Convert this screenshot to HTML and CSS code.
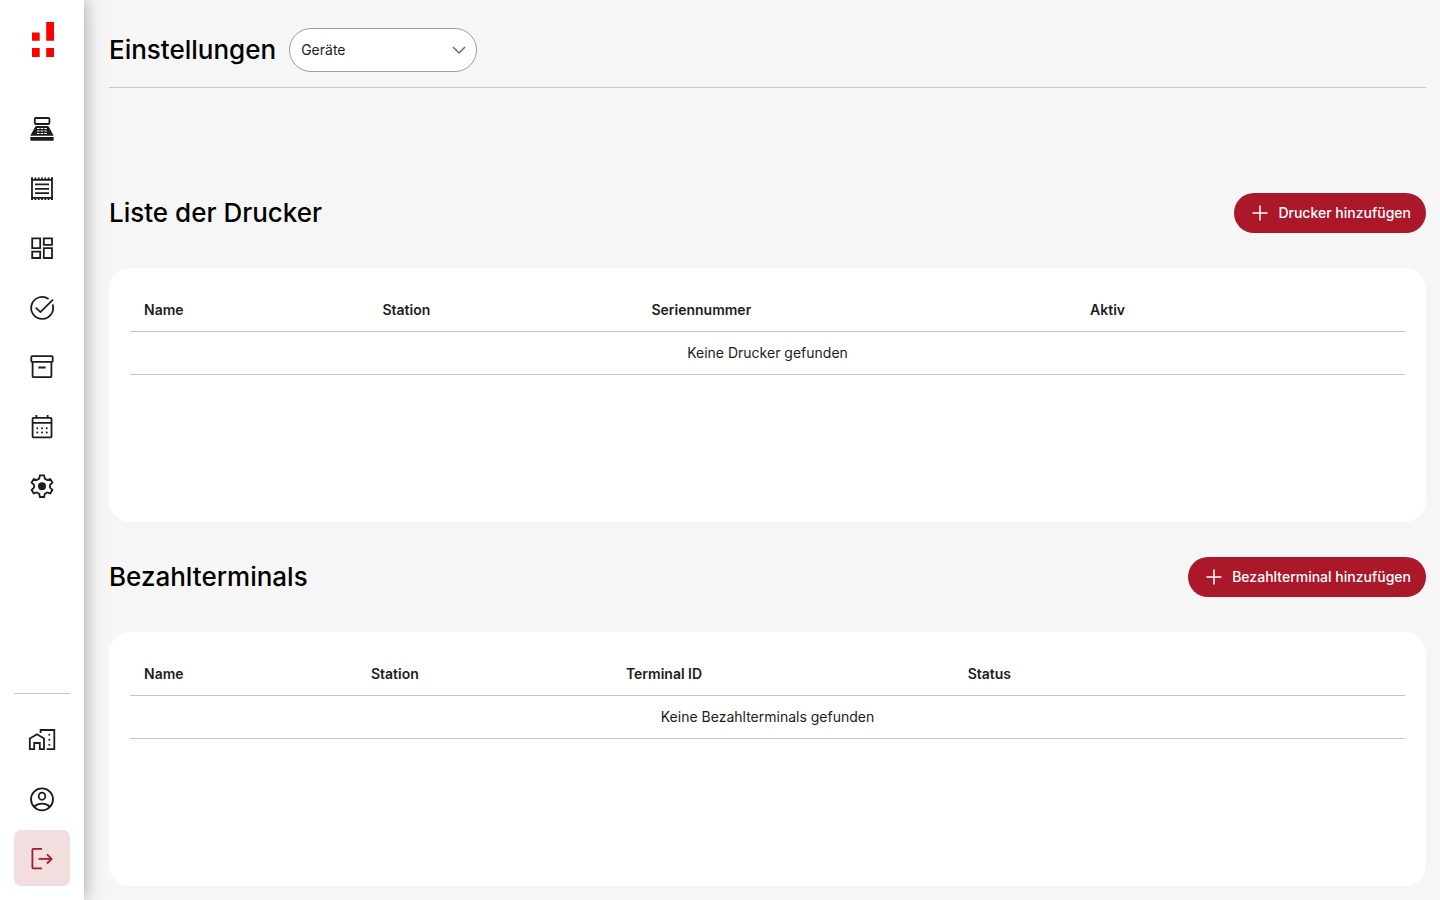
FILE: index.html
```html
<!DOCTYPE html>
<html lang="de">
  <head>
    <meta charset="UTF-8" />
    <meta name="viewport" content="width=device-width, initial-scale=1.0" />
    <title>Einstellungen</title>
    <link rel="stylesheet" href="styles.css">
  </head>

  <body>
    <aside class="sidebar">
      <a href="#" class="logo" aria-label="Startseite">
        <svg width="24" height="36" viewBox="0 0 24 36">
          <path d="M2 10.6h7.7v8.2H2zM16.2 0H24v18.8h-7.8zM2 26h7.7v9H2zM16.2 26H24v9h-7.8z" />
        </svg>
      </a>

      <nav class="menu">
        <a href="#" aria-label="Kasse">
          <svg viewBox="0 0 28 28">
            <rect x="6.8" y="3" width="14.6" height="6" rx="1" />
            <path class="fill" d="M8.4 11h11.2q.9 0 1.2.7l4.9 9.1H2.3l4.9-9.1q.3-.7 1.2-.7zM2.3 22h23.4v2.6q0 1.2-1.2 1.2h-21q-1.2 0-1.2-1.2z" />
            <path class="keys" d="M9 13.5h10M9 16h10M9 18.5h10" />
          </svg>
        </a>
        <a href="#" aria-label="Belege">
          <svg viewBox="0 0 28 28">
            <path d="M4 2.5v22.6M24 2.5v22.6M4 4.8h20M4 22.8h20M7 9.4h14M7 13.9h14M7 18.2h14" />
            <path class="teeth" d="M3.2 3.4h21.6M3.2 24.2h21.6" />
          </svg>
        </a>
        <a href="#" aria-label="Übersicht">
          <svg viewBox="0 0 28 28">
            <path d="M4.2 4.4h8v9.8h-8zM15.8 4.4H24v6.4h-8.2zM4.2 17.7h8V24h-8zM15.8 14.2H24V24h-8.2z" />
          </svg>
        </a>
        <a href="#" aria-label="Aufgaben">
          <svg viewBox="0 0 28 28">
            <path d="M20.6 5A11 11 0 1 0 24.6 10.4M7.8 13.6l4.6 4.5L25 5.6" />
          </svg>
        </a>
        <a href="#" aria-label="Archiv">
          <svg viewBox="0 0 28 28">
            <rect x="3.3" y="3.2" width="21.4" height="5.6" rx="0.8" />
            <path d="M4.6 9v14.2q0 1 1 1h16.8q1 0 1-1V9M10.4 14.5h7.2" />
          </svg>
        </a>
        <a href="#" aria-label="Kalender">
          <svg viewBox="0 0 28 28">
            <rect x="4.6" y="4.8" width="18.9" height="19.6" rx="0.8" />
            <path d="M4.6 9.9h18.9M8.4 2v2.7M19.6 2v2.7" />
            <path class="dots" d="M9.3 15.2h0M14 15.2h0M18.7 15.2h0M9.3 19.4h0M14 19.4h0M18.7 19.4h0" />
          </svg>
        </a>
        <a href="#" aria-label="Einstellungen">
          <svg viewBox="0 0 28 28">
            <path d="M11.9 3.4h4.2l.7 3.2 2.4 1.4 3.1-1 2.1 3.6-2.4 2.2v2.8l2.4 2.2-2.1 3.6-3.1-1-2.4 1.4-.7 3.2h-4.2l-.7-3.2-2.4-1.4-3.1 1-2.1-3.6L6 15.6v-2.8l-2.4-2.2L5.7 7l3.1 1 2.4-1.4z" />
            <circle class="fill" cx="14" cy="14.2" r="4" />
          </svg>
        </a>
      </nav>

      <nav class="menu menu-bottom">
        <a href="#" aria-label="Standorte">
          <svg viewBox="0 0 28 28">
            <path d="M1.8 23.2V12.4L9 8.3l7 4.1v10.8h-4.2V17H6.2v6.2zM12.6 7V4h13.7v19.2h-7.6" />
            <path class="dots" d="M21.3 8.7h0M21.3 13.7h0M21.3 18.7h0" />
          </svg>
        </a>
        <a href="#" aria-label="Profil">
          <svg viewBox="0 0 28 28">
            <circle cx="14" cy="14.3" r="11" />
            <ellipse cx="14" cy="11.2" rx="3.3" ry="3.6" />
            <path d="M6 21.7q3.5-3 8-3t8 3" />
          </svg>
        </a>
        <a href="#" class="logout" aria-label="Abmelden">
          <svg viewBox="0 0 28 28">
            <path d="M14 4.9H5.2q-.8 0-.8.8v17.8q0 .8.8.8H14M10.6 14.9h13M19 10.3l4.6 4.6-4.6 4.6" />
          </svg>
        </a>
      </nav>
    </aside>

    <main>
      <header class="page-header">
        <h1>Einstellungen</h1>
        <div class="select">
          <select aria-label="Bereich">
            <option>Geräte</option>
          </select>
          <svg width="14" height="8" viewBox="0 0 14 8"><path d="M1 1l6 6 6-6" /></svg>
        </div>
      </header>

      <section>
        <div class="section-header">
          <h2>Liste der Drucker</h2>
          <button type="button">
            <svg width="16" height="16" viewBox="0 0 16 16"><path d="M8 .5v15M.5 8h15" /></svg>
            Drucker hinzufügen
          </button>
        </div>
        <div class="card">
          <table class="printers">
            <thead>
              <tr>
                <th>Name</th>
                <th>Station</th>
                <th>Seriennummer</th>
                <th>Aktiv</th>
              </tr>
            </thead>
            <tbody>
              <tr>
                <td colspan="4">Keine Drucker gefunden</td>
              </tr>
            </tbody>
          </table>
        </div>
      </section>

      <section>
        <div class="section-header">
          <h2>Bezahlterminals</h2>
          <button type="button">
            <svg width="16" height="16" viewBox="0 0 16 16"><path d="M8 .5v15M.5 8h15" /></svg>
            Bezahlterminal hinzufügen
          </button>
        </div>
        <div class="card">
          <table class="terminals">
            <thead>
              <tr>
                <th>Name</th>
                <th>Station</th>
                <th>Terminal ID</th>
                <th>Status</th>
              </tr>
            </thead>
            <tbody>
              <tr>
                <td colspan="4">Keine Bezahlterminals gefunden</td>
              </tr>
            </tbody>
          </table>
        </div>
      </section>
    </main>
  </body>
</html>
```
FILE: styles.css
```css
* {
  box-sizing: border-box;
}

body {
  margin: 0;
  display: flex;
  min-height: 100vh;
  background-color: #f6f6f6;
  color: #1d1d1b;
  font-family: Inter, "Liberation Sans", sans-serif;
  font-size: 14px;
  line-height: 20px;
}

svg {
  fill: none;
  stroke: currentColor;
}

/* sidebar */

.sidebar {
  flex: none;
  display: flex;
  flex-direction: column;
  width: 84px;
  padding: 22px 14px 14px;
  background-color: #fff;
  box-shadow: 0 0 18px rgba(0, 0, 0, 0.35);
}

.logo {
  align-self: center;
  height: 36px;
  margin-bottom: 43px;
}

.logo svg {
  display: block;
  fill: #f00;
  stroke: none;
}

.menu {
  display: flex;
  flex-direction: column;
  justify-content: space-between;
  min-height: 413px;
}

.menu a {
  display: grid;
  place-items: center;
  height: 56px;
  border-radius: 7px;
  color: #1d1d1b;
}

.menu svg {
  width: 28px;
  height: 28px;
  stroke-width: 1.8;
}

.menu .fill {
  fill: currentColor;
  stroke: none;
}

.menu .keys {
  stroke: #fff;
  stroke-width: 1.2;
  stroke-dasharray: 2.6 1;
}

.menu .teeth {
  stroke-dasharray: 1.8 1.5;
}

.menu .dots {
  stroke-width: 2;
  stroke-linecap: round;
}

.menu-bottom {
  gap: 3px;
  min-height: 0;
  margin-top: auto;
  padding-top: 18px;
  border-top: 1px solid #c6c6c6;
}

.menu .logout {
  background-color: #f2dddf;
  color: #ab182a;
}

/* content */

main {
  flex: 1;
  min-width: 0;
  padding: 28px 14px 14px 25px;
}

h1,
h2 {
  margin: 0;
  color: #000;
  font-size: 26px;
  font-weight: 500;
  line-height: 40px;
}

.page-header {
  display: flex;
  align-items: center;
  gap: 13px;
  margin-bottom: 104px;
  padding-bottom: 15px;
  border-bottom: 1px solid #c6c6c6;
}

.select {
  display: grid;
  align-items: center;
  width: 188px;
}

.select select,
.select svg {
  grid-area: 1 / 1;
}

.select select {
  appearance: none;
  width: 100%;
  height: 44px;
  padding: 0 32px 0 11px;
  border: 1px solid #9d9d9c;
  border-radius: 22px;
  background-color: #fff;
  color: inherit;
  font: inherit;
}

.select svg {
  justify-self: end;
  margin-right: 11px;
  color: #6f6f6e;
  stroke-width: 1.5;
  pointer-events: none;
}

section + section {
  margin-top: 34px;
}

.section-header {
  display: flex;
  align-items: center;
  justify-content: space-between;
  min-height: 41px;
  margin-bottom: 35px;
}

button {
  display: flex;
  align-items: center;
  gap: 10px;
  padding: 10px 15px 10px 18px;
  border: 0;
  border-radius: 21px;
  background-color: #ab182a;
  color: #fff;
  font: inherit;
  font-weight: 500;
  cursor: pointer;
}

button svg {
  stroke-width: 1.5;
}

.card {
  min-height: 254px;
  padding: 21px;
  border-radius: 21px;
  background-color: #fff;
}

table {
  width: 100%;
  border-collapse: collapse;
  table-layout: fixed;
}

th,
td {
  height: 43px;
  padding: 0 14px;
  border-bottom: 1px solid #c6c6c6;
}

th {
  height: 42px;
  font-weight: 600;
  text-align: left;
}

td {
  text-align: center;
}

.printers th:nth-child(1) {
  width: 18.7%;
}

.printers th:nth-child(2) {
  width: 21.1%;
}

.printers th:nth-child(3) {
  width: 34.4%;
}

.terminals th:nth-child(1) {
  width: 17.8%;
}

.terminals th:nth-child(2) {
  width: 20%;
}

.terminals th:nth-child(3) {
  width: 26.8%;
}
```
